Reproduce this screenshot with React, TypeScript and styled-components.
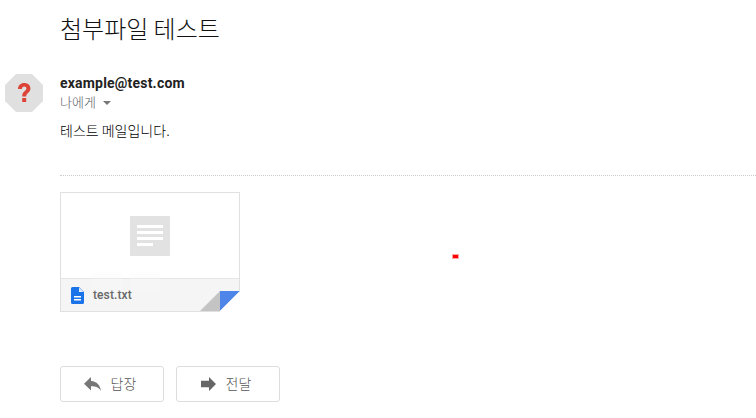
import React from 'react';
import styled, { createGlobalStyle } from 'styled-components';

const GlobalStyle = createGlobalStyle`
  html, body {
    margin: 0;
    padding: 0;
    background: #fff;
    overflow: hidden;
  }
  body {
    font-family: Roboto, "Noto Sans CJK KR", "Liberation Sans", sans-serif;
  }
`;

const Page = styled.div`
  position: relative;
  width: 756px;
  height: 418px;
  overflow: hidden;
`;

const Subject = styled.h2`
  margin: 0;
  padding: 13px 0 0 60px;
  height: 60px;
  box-sizing: border-box;
  font-size: 24px;
  line-height: 30px;
  font-weight: 300;
  color: #111;
  font-family: "Noto Sans CJK KR", sans-serif;
`;

const MessageHead = styled.div`
  display: flex;
  height: 61px;
  padding-left: 5px;
`;

const Avatar = styled.div`
  width: 38px;
  height: 38px;
  margin-top: 14px;
  margin-right: 17px;
  flex: none;
`;

const Sender = styled.div`
  padding-top: 14px;
`;

const SenderName = styled.div`
  font-size: 14px;
  line-height: 18px;
  font-weight: 700;
  letter-spacing: 0.2px;
  color: #222;
`;

const Recipient = styled.div`
  display: flex;
  align-items: center;
  gap: 7px;
  margin-top: 2px;
  font-family: "Noto Sans CJK KR", sans-serif;
  font-size: 13px;
  font-weight: 300;
  line-height: 16px;
  color: #5f6368;
`;

const Caret = styled.span`
  width: 0;
  height: 0;
  margin-top: 2px;
  border-left: 4px solid transparent;
  border-right: 4px solid transparent;
  border-top: 4px solid #777;
`;

const Body = styled.div`
  padding-left: 60px;
  font-family: "Noto Sans CJK KR", sans-serif;
  font-size: 14px;
  font-weight: 300;
  line-height: 18px;
  height: 54px;
  color: #000;
`;

const Divider = styled.div`
  margin-left: 60px;
  border-top: 1px dotted #ccc;
`;

const Attachment = styled.div`
  position: relative;
  box-sizing: border-box;
  width: 180px;
  height: 120px;
  margin: 16px 0 0 60px;
  border: 1px solid #e0e0e0;
  display: flex;
  flex-direction: column;
`;

const Preview = styled.div`
  height: 85px;
  flex: none;
  display: flex;
  justify-content: center;
  padding-top: 23px;
  box-sizing: border-box;
`;

const FileBar = styled.div`
  flex: 1;
  display: flex;
  align-items: center;
  gap: 9px;
  padding-left: 10px;
  background: #f5f5f5;
  border-top: 1px solid #e6e6e6;
`;

const FileName = styled.span`
  font-size: 12px;
  font-weight: 500;
  letter-spacing: 0.1px;
  color: #666;
`;

const Ghost = styled.div<{ $left: number }>`
  position: absolute;
  left: ${(p) => p.$left}px;
  top: 80px;
  width: 30px;
  height: 19px;
  background: rgba(250, 250, 250, 0.3);
`;

const Fold = styled.svg`
  position: absolute;
  right: -1px;
  bottom: -1px;
`;

const Actions = styled.div`
  display: flex;
  gap: 12px;
  margin: 54px 0 0 60px;
`;

const ActionButton = styled.button`
  display: flex;
  align-items: center;
  justify-content: center;
  gap: 10px;
  width: 104px;
  height: 36px;
  padding: 0 4px 0 0;
  background: #fff;
  border: 1px solid #ddd;
  border-radius: 3px;
  font-family: "Noto Sans CJK KR", sans-serif;
  font-size: 14px;
  font-weight: 300;
  color: #555;
`;

const ActionLabel = styled.span`
  margin-bottom: 3px;
`;

const RedMark = styled.div`
  position: absolute;
  left: 453px;
  top: 255px;
  width: 5px;
  height: 3px;
  background: #f00;
  box-shadow: 0 0 0 1px rgba(255, 0, 0, 0.35);
`;

export default function App() {
  return (
    <Page>
      <GlobalStyle />
      <Subject>첨부파일 테스트</Subject>
      <MessageHead>
        <Avatar>
          <svg width="38" height="38" viewBox="0 0 38 38">
            <polygon points="11,0 27,0 38,11 38,27 27,38 11,38 0,27 0,11" fill="#e0e0e0" />
            <path d="M13 15c0-3.600 2.600-6 6.200-6s6.200 2.200 6.200 5.400c0 4.200-4.200 4.300-4.200 8.100h-4c0-5.300 4.200-5.300 4.200-7.900 0-1.200-.9-2-2.200-2s-2.300 1-2.300 2.400z" fill="#db4437" />
            <rect x="17.200" y="24" width="4" height="4" fill="#db4437" />
          </svg>
        </Avatar>
        <Sender>
          <SenderName>example@test.com</SenderName>
          <Recipient>
            나에게
            <Caret />
          </Recipient>
        </Sender>
      </MessageHead>
      <Body>테스트 메일입니다.</Body>
      <Divider />
      <Attachment>
        <Preview>
          <svg width="40" height="40" viewBox="0 0 40 40">
            <rect width="40" height="40" rx="1" fill="#e2e2e2" />
            <path d="M7 9h26v3H7zM7 15h26v3H7zM7 21h26v3H7zM7 27h16v3H7z" fill="#fff" />
          </svg>
        </Preview>
        <FileBar>
          <svg width="13" height="17" viewBox="0 0 13 17">
            <path d="M1.500 0H8l5 5V15.500a1.500 1.500 0 0 1-1.500 1.500H1.500A1.500 1.500 0 0 1 0 15.500V1.500A1.500 1.500 0 0 1 1.500 0z" fill="#1a73e8" />
            <path d="M8 0.500V5h4.500z" fill="#e4edfc" />
            <path d="M3 9h7v1.600H3zM3 12h7v1.600H3z" fill="#fff" />
          </svg>
          <FileName>test.txt</FileName>
        </FileBar>
        <Ghost $left={31} />
        <Ghost $left={69} />
        <Fold width="40" height="21" viewBox="0 0 40 21">
          <polygon points="0,20 20,0 20,20" fill="#c4c4c4" />
          <polygon points="20,0 40,0 20,20" fill="#4d86e8" />
          <polygon points="40,0 40,21 20,21 20,20" fill="#fff" />
        </Fold>
      </Attachment>
      <Actions>
        <ActionButton>
          <svg width="17" height="14" viewBox="0 0 17 14">
            <path d="M7 0v4c6 .4 9 4 10 10-2-3.400-5-4.800-10-4.800V13.500L0 6.700z" fill="#777" />
          </svg>
          <ActionLabel>답장</ActionLabel>
        </ActionButton>
        <ActionButton>
          <svg width="15" height="14" viewBox="0 0 15 14">
            <path d="M8 0l7 7-7 7V10.200H0V3.800h8z" fill="#666" />
          </svg>
          <ActionLabel>전달</ActionLabel>
        </ActionButton>
      </Actions>
      <RedMark />
    </Page>
  );
}
